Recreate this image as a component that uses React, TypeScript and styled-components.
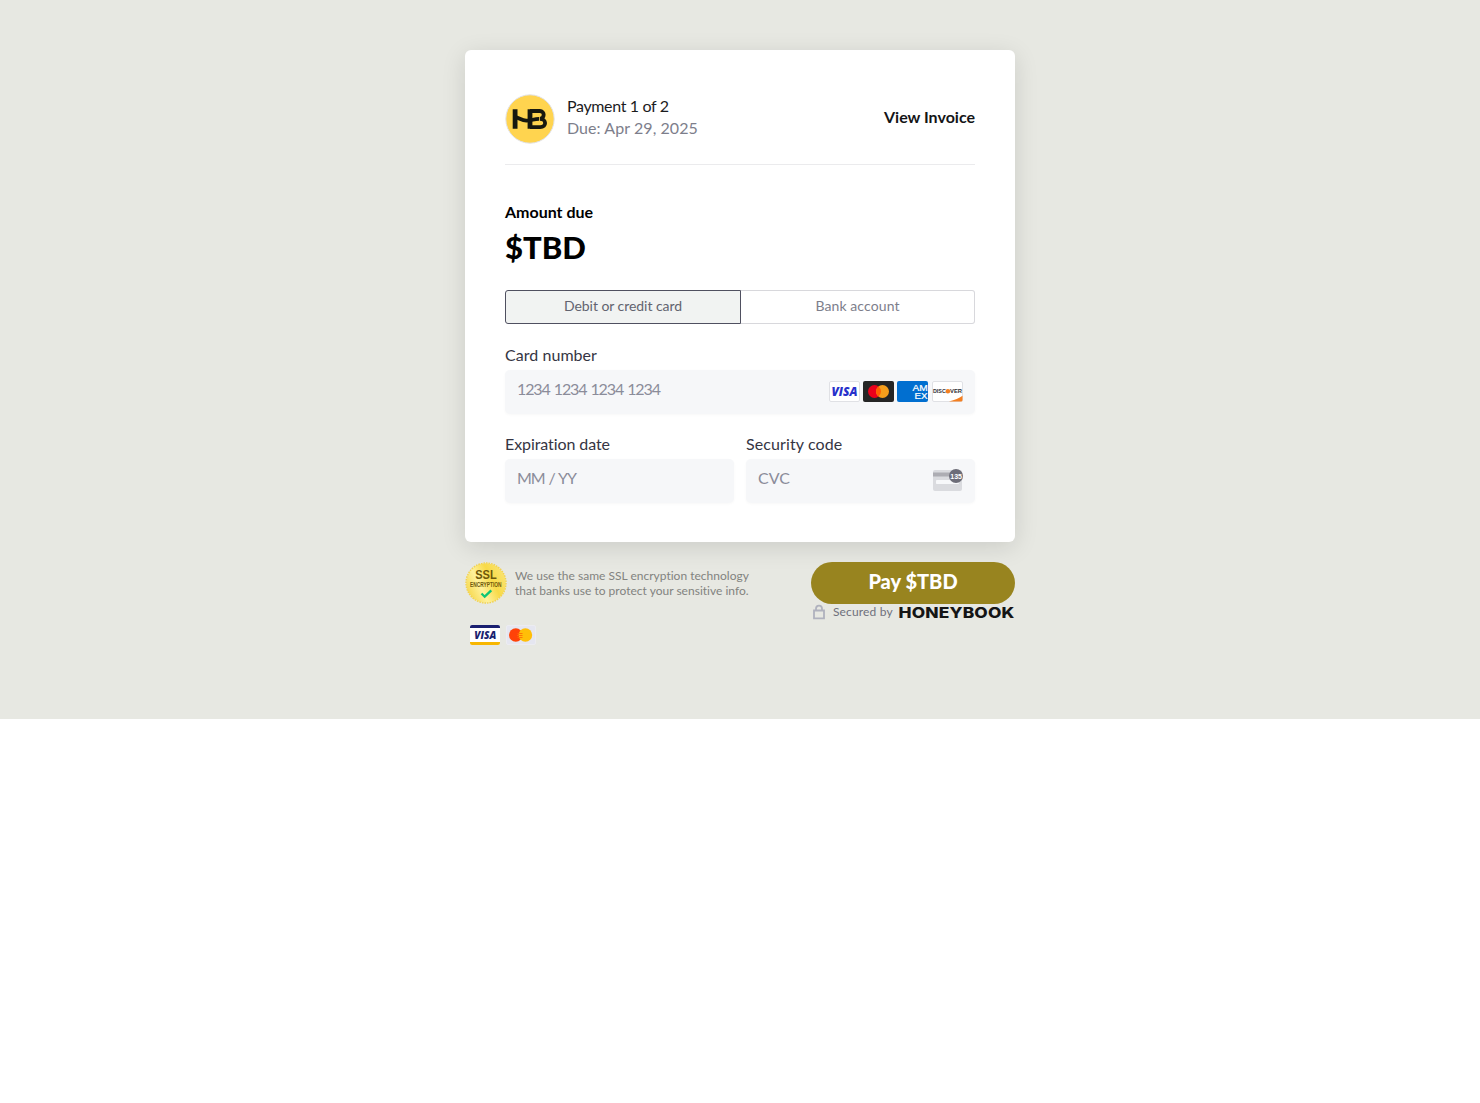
import React from "react";
import styled, { createGlobalStyle, css } from "styled-components";

const GlobalStyle = createGlobalStyle`
  * {
    box-sizing: border-box;
  }

  body {
    margin: 0;
    background: #fff;
    font-family: Lato, "Liberation Sans", sans-serif;
    font-size: 16px;
    color: #000;
  }
`;

const Page = styled.main`
  height: 719px;
  padding-top: 50px;
  background: #e7e8e2;
`;

const Column = styled.div`
  width: 550px;
  margin: 0 auto;
`;

const Card = styled.section`
  height: 492px;
  padding: 44px 40px 0;
  border-radius: 6px;
  background: #fff;
  box-shadow: 0 5px 25px rgba(0, 0, 0, 0.12);
`;

const Header = styled.header`
  display: flex;
  align-items: center;
  height: 71px;
  padding-bottom: 20px;
  border-bottom: 1px solid #ebebed;
`;

const HeaderInfo = styled.div`
  flex: 1;
  margin: -4px 0 0 12px;
  line-height: 22px;
`;

const PaymentIndex = styled.div`
  color: #1c1c1e;
  letter-spacing: -0.35px;
`;

const DueDate = styled.div`
  color: #7d7e8b;
  letter-spacing: 0.07px;
`;

const InvoiceLink = styled.a`
  margin-top: -5px;
  font-weight: 700;
  color: #141416;
  cursor: pointer;
`;

const AmountLabel = styled.div`
  margin-top: 37px;
  font-weight: 700;
  line-height: 20px;
`;

const Amount = styled.div`
  margin-top: 5px;
  font-size: 31px;
  font-weight: 900;
  line-height: 40px;
`;

const Tabs = styled.div`
  display: flex;
  margin-top: 23px;
`;

const Tab = styled.button<{ $active?: boolean }>`
  flex: none;
  width: ${({ $active }) => ($active ? 236 : 234)}px;
  height: 34px;
  padding: 0 0 3px;
  border: 1px solid #d8d8dc;
  border-left: 0;
  border-radius: 0 3px 3px 0;
  background: #fff;
  font-family: inherit;
  font-size: 14px;
  letter-spacing: 0.1px;
  color: #7d7e8b;
  cursor: pointer;

  ${({ $active }) =>
    $active &&
    css`
      border: 1px solid #4f5060;
      border-radius: 3px 0 0 3px;
      background: #f1f3f2;
      letter-spacing: -0.05px;
      color: #62636f;
    `}
`;

const Fields = styled.div`
  display: grid;
  grid-template-columns: repeat(2, minmax(0, 1fr));
  gap: 21px 12px;
  margin-top: 21px;
`;

const Field = styled.label<{ $wide?: boolean }>`
  grid-column: ${({ $wide }) => ($wide ? "1 / -1" : "auto")};
`;

const FieldLabel = styled.div<{ $spacing?: number }>`
  height: 24px;
  line-height: 19px;
  letter-spacing: ${({ $spacing = 0.05 }) => $spacing}px;
  color: #353543;
`;

const InputBox = styled.div`
  display: flex;
  align-items: center;
  height: 44px;
  padding: 0 12px 2px;
  border-radius: 5px;
  background: #f6f7f9;
  box-shadow: 0 1px 3px rgba(0, 0, 0, 0.03);
`;

const FieldsBody = styled(Fields)`
  /* labels sit a pixel above the row's own rhythm */
  ${FieldLabel} {
    height: 25px;
  }

  row-gap: 20px;
`;

const Input = styled.input<{ $spacing?: number; $wordSpacing?: number }>`
  flex: 1;
  min-width: 0;
  height: 20px;
  margin-bottom: 5px;
  padding: 0;
  border: 0;
  outline: 0;
  background: none;
  font: inherit;
  letter-spacing: ${({ $spacing = 0 }) => $spacing}px;
  word-spacing: ${({ $wordSpacing = 0 }) => $wordSpacing}px;

  &::placeholder {
    color: #8b8c9a;
    opacity: 1;
  }
`;

const Brands = styled.div`
  display: flex;
  gap: 3px;

  svg {
    display: block;
  }

  svg:last-child {
    margin-left: 1px;
  }
`;

const Footer = styled.footer`
  display: flex;
  justify-content: space-between;
  margin-top: 20px;
`;

const Security = styled.div`
  display: flex;
  height: 42px;

  svg {
    overflow: visible;
  }
`;

const SecurityText = styled.p`
  margin: 6px 0 0 8px;
  font-size: 12px;
  line-height: 15px;
  letter-spacing: 0.01px;
  white-space: nowrap;
  color: #82837f;
`;

const Accepted = styled.div`
  display: flex;
  gap: 6px;
  margin: 21px 0 0 5px;
`;

const PaySide = styled.div`
  width: 204px;
`;

const PayButton = styled.button`
  display: block;
  width: 100%;
  height: 42px;
  padding: 0 0 4px;
  border: 0;
  border-radius: 21px;
  background: #98841f;
  font-family: inherit;
  font-size: 20px;
  font-weight: 900;
  color: #fff;
  cursor: pointer;
`;

const Secured = styled.div`
  display: flex;
  align-items: center;
  height: 16px;
  padding-left: 2px;
  font-size: 12px;
  letter-spacing: 0.15px;
  white-space: nowrap;
  color: #6f707c;

  span {
    width: 65px;
    margin: -2px 0 0 8px;
  }

  svg {
    overflow: visible;
  }
`;

const HoneyLogo = () => (
  <svg width="50" height="50" viewBox="0 0 50 50">
    <circle cx="25" cy="25" r="24.2" fill="#ffd44f" stroke="#e2e2e5" />
    <g fill="none" stroke="#17180f">
      <path d="M10.1 15.2V34.8M25 15.2V34.8" strokeWidth="4.8" />
      <path strokeWidth="3.8" d="M10 23.2C14 23.5 16.5 26.8 21.5 26.7C26.5 26.6 29 24.8 34 24.8" />
      <path d="M25 17H34.8C40 17 40 24.6 34.8 24.8C41.8 24.8 41.8 33.1 35.2 33.1H25" strokeWidth="3.8" />
    </g>
  </svg>
);

const VisaIcon = () => (
  <svg width="31" height="21" viewBox="0 0 31 21">
    <rect x=".5" y=".5" width="30" height="20" rx="1.5" fill="#fff" stroke="#e0e1e5" />
    <text x="2.5" y="14.7" textLength="26" lengthAdjust="spacingAndGlyphs" fontFamily="Open Sans, sans-serif" fontSize="11.5" fontWeight="800" fontStyle="italic" fill="#2630cb">VISA</text>
  </svg>
);

const MastercardIcon = () => (
  <svg width="31" height="21" viewBox="0 0 31 21">
    <rect width="31" height="21" rx="2" fill="#252525" />
    <circle cx="11.5" cy="10.5" r="6.5" fill="#eb001b" />
    <circle cx="19.5" cy="10.5" r="6.5" fill="#f79e1b" />
    <path d="M15.5 5.4a6.5 6.5 0 0 1 0 10.2a6.5 6.5 0 0 1 0-10.2" fill="#ff5f00" />
  </svg>
);

const AmexIcon = () => (
  <svg width="31" height="21" viewBox="0 0 31 21">
    <rect width="31" height="21" rx="2" fill="#016fd0" />
    <g fill="#fff" stroke="#fff" strokeWidth=".2" fontFamily="Liberation Sans, sans-serif" fontSize="8.6">
      <text x="15.6" y="9.9" textLength="15.2" lengthAdjust="spacingAndGlyphs">AM</text>
      <text x="17.6" y="17.6" textLength="13" lengthAdjust="spacingAndGlyphs">EX</text>
    </g>
  </svg>
);

const DiscoverIcon = () => (
  <svg width="31" height="21" viewBox="0 0 31 21">
    <rect x=".5" y=".5" width="30" height="20" rx="1.5" fill="#fff" stroke="#e0e1e5" />
    <path d="M17 20.5C23 19 27 17 30.5 14.7V19a1.5 1.5 0 0 1-1.5 1.5z" fill="#f47f20" />
    <g fontFamily="Liberation Sans, sans-serif" fontSize="6" fontWeight="700" fill="#303035">
      <text x="1" y="12.4" textLength="12.8" lengthAdjust="spacingAndGlyphs">DISC</text>
      <text x="18" y="12.4" textLength="12" lengthAdjust="spacingAndGlyphs">VER</text>
    </g>
    <circle cx="15.9" cy="10.2" r="2.3" fill="#f47f20" />
  </svg>
);

const CvcIcon = () => (
  <svg width="31" height="23" viewBox="0 0 31 23">
    <rect x="1" y="1" width="29" height="21" rx="2" fill="#dadbdf" />
    <path d="M1 3.5h29v4H1z" fill="#adadb3" />
    <rect x="4" y="11" width="23" height="4" rx=".8" fill="#f7f8fa" />
    <circle cx="24" cy="7" r="7" fill="#6d6d78" />
    <text x="18.3" y="9.8" textLength="11.7" lengthAdjust="spacingAndGlyphs" fontFamily="Liberation Sans, sans-serif" fontSize="8" fontWeight="700" fill="#fff">135</text>
  </svg>
);

const SslBadge = () => (
  <svg width="42" height="42" viewBox="0 0 42 42">
    <defs>
      <linearGradient id="gold" x1="0" y1=".75" x2="1" y2=".25">
        <stop offset="0" stopColor="#f5d649" />
        <stop offset=".35" stopColor="#fff19b" />
        <stop offset=".65" stopColor="#f8da48" />
        <stop offset="1" stopColor="#fae474" />
      </linearGradient>
    </defs>
    <circle cx="21" cy="21" r="19.8" fill="url(#gold)" />
    <circle cx="21" cy="21" r="20" fill="none" stroke="#f3d34f" strokeWidth="1.4" strokeDasharray="1.6 1" />
    <g fontFamily="Liberation Sans, sans-serif" fontWeight="700" fill="#6d570b">
      <text x="10.2" y="17.3" fontSize="12" textLength="21.5" lengthAdjust="spacingAndGlyphs">SSL</text>
      <text x="5" y="25.2" fontSize="6.3" textLength="31.5" lengthAdjust="spacingAndGlyphs">ENCRYPTION</text>
    </g>
    <path d="M16.5 31.5L19.7 34.7L26.3 28.3" fill="none" stroke="#0fc574" strokeWidth="2.3" />
  </svg>
);

const VisaCard = () => (
  <svg width="30" height="20" viewBox="0 0 30 20">
    <rect width="30" height="20" rx="2" fill="#fff" />
    <path d="M2 0h26a2 2 0 0 1 2 2v1H0V2a2 2 0 0 1 2-2" fill="#1a1f70" />
    <path d="M0 17h30v1a2 2 0 0 1-2 2H2a2 2 0 0 1-2-2z" fill="#f7b600" />
    <text x="4.2" y="14" textLength="22" lengthAdjust="spacingAndGlyphs" fontFamily="Open Sans, sans-serif" fontSize="10.8" fontWeight="800" fontStyle="italic" fill="#1a1f70">VISA</text>
  </svg>
);

const MastercardCard = () => (
  <svg width="30" height="20" viewBox="0 0 30 20">
    <rect x=".5" y=".5" width="29" height="19" rx="1.5" fill="#e5e6f0" stroke="#ececf1" />
    <circle cx="9.8" cy="10" r="6.8" fill="#ff4208" />
    <circle cx="19.4" cy="10" r="6.8" fill="#ffbe08" />
    <path d="M11.5 8.5h5M11 10.5h5.5M11.5 12.5h5" stroke="#ff6a08" strokeWidth=".9" />
  </svg>
);

const LockIcon = () => (
  <svg width="12" height="16" viewBox="0 0 12 16">
    <path d="M1 6.5h10v7.8H1zM3 6.5V4.7a3 3 0 0 1 6 0v1.8" fill="none" stroke="#b0b2be" strokeWidth="1.8" />
  </svg>
);

const Wordmark = () => (
  <svg width="117" height="16" viewBox="0 0 117 16">
    <text x=".5" y="13.9" textLength="116" lengthAdjust="spacingAndGlyphs" fontFamily="Inter, sans-serif" fontSize="14.8" fontWeight="800" fill="#151515">HONEYBOOK</text>
  </svg>
);

export default function App() {
  return (
    <>
      <GlobalStyle />
      <Page>
        <Column>
          <Card>
            <Header>
              <HoneyLogo />
              <HeaderInfo>
                <PaymentIndex>Payment 1 of 2</PaymentIndex>
                <DueDate>Due: Apr 29, 2025</DueDate>
              </HeaderInfo>
              <InvoiceLink>View Invoice</InvoiceLink>
            </Header>
            <AmountLabel>Amount due</AmountLabel>
            <Amount>$TBD</Amount>
            <Tabs>
              <Tab $active>Debit or credit card</Tab>
              <Tab>Bank account</Tab>
            </Tabs>
            <FieldsBody>
              <Field $wide>
                <FieldLabel>Card number</FieldLabel>
                <InputBox>
                  <Input $spacing={-1.1} $wordSpacing={1} placeholder="1234 1234 1234 1234" />
                  <Brands>
                    <VisaIcon />
                    <MastercardIcon />
                    <AmexIcon />
                    <DiscoverIcon />
                  </Brands>
                </InputBox>
              </Field>
              <Field>
                <FieldLabel $spacing={-0.08}>Expiration date</FieldLabel>
                <InputBox>
                  <Input $spacing={-1.2} $wordSpacing={1.3} placeholder="MM / YY" />
                </InputBox>
              </Field>
              <Field>
                <FieldLabel $spacing={0.1}>Security code</FieldLabel>
                <InputBox>
                  <Input placeholder="CVC" />
                  <CvcIcon />
                </InputBox>
              </Field>
            </FieldsBody>
          </Card>
          <Footer>
            <div>
              <Security>
                <SslBadge />
                <SecurityText>
                  We use the same SSL encryption technology
                  <br />
                  that banks use to protect your sensitive info.
                </SecurityText>
              </Security>
              <Accepted>
                <VisaCard />
                <MastercardCard />
              </Accepted>
            </div>
            <PaySide>
              <PayButton>Pay $TBD</PayButton>
              <Secured>
                <LockIcon />
                <span>Secured by</span>
                <Wordmark />
              </Secured>
            </PaySide>
          </Footer>
        </Column>
      </Page>
    </>
  );
}
